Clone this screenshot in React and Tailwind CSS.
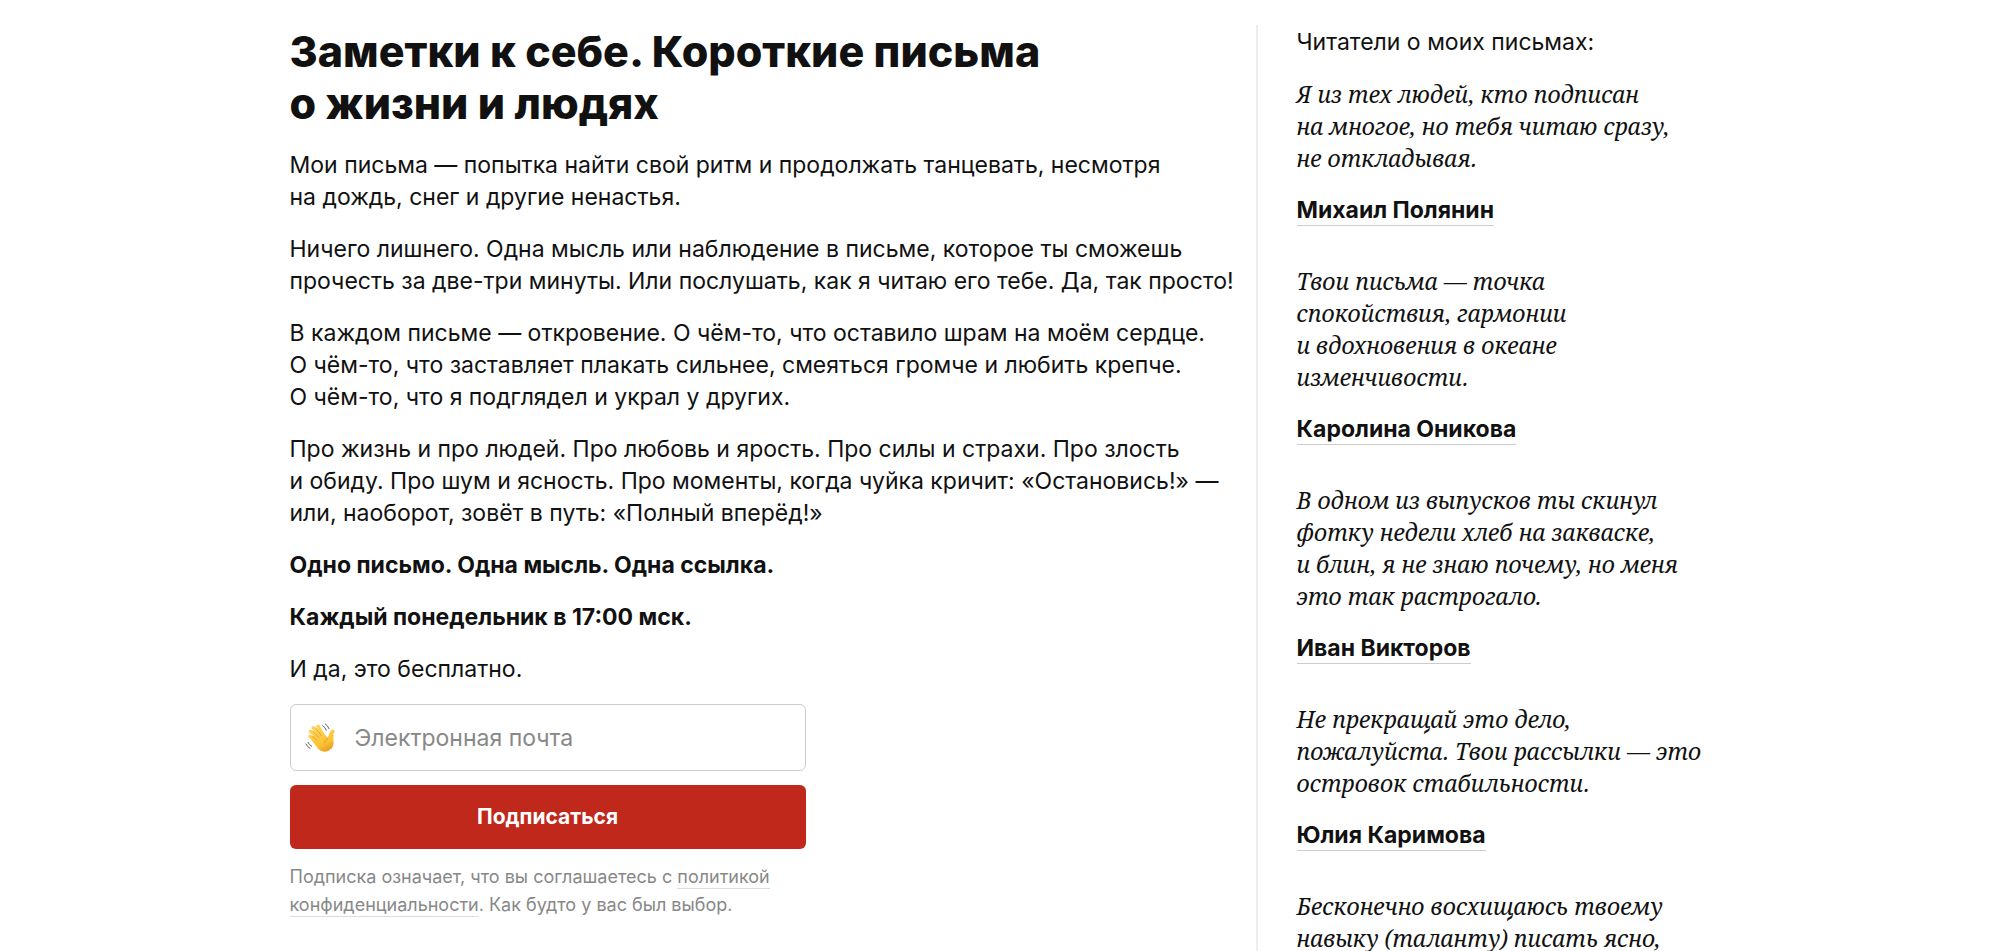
const intro = [
  ['Мои письма — попытка найти свой ритм и продолжать танцевать, несмотря', 'на дождь, снег и другие ненастья.'],
  ['Ничего лишнего. Одна мысль или наблюдение в письме, которое ты сможешь', 'прочесть за две-три минуты. Или послушать, как я читаю его тебе. Да, так просто!'],
  ['В каждом письме — откровение. О чём-то, что оставило шрам на моём сердце.', 'О чём-то, что заставляет плакать сильнее, смеяться громче и любить крепче.', 'О чём-то, что я подглядел и украл у других.'],
  ['Про жизнь и про людей. Про любовь и ярость. Про силы и страхи. Про злость', 'и обиду. Про шум и ясность. Про моменты, когда чуйка кричит: «Остановись!» —', 'или, наоборот, зовёт в путь: «Полный вперёд!»'],
];

const reviews = [
  { lines: ['Я из тех людей, кто подписан', 'на многое, но тебя читаю сразу,', 'не откладывая.'], name: 'Михаил Полянин' },
  { lines: ['Твои письма — точка', 'спокойствия, гармонии', 'и вдохновения в океане', 'изменчивости.'], name: 'Каролина Оникова' },
  { lines: ['В одном из выпусков ты скинул', 'фотку недели хлеб на закваске,', 'и блин, я не знаю почему, но меня', 'это так растрогало.'], name: 'Иван Викторов' },
  { lines: ['Не прекращай это дело,', 'пожалуйста. Твои рассылки — это', 'островок стабильности.'], name: 'Юлия Каримова' },
  { lines: ['Бесконечно восхищаюсь твоему', 'навыку (таланту) писать ясно,'], name: null },
];

function Lines({ lines }) {
  return lines.map((line) => (
    <span key={line} className="block whitespace-nowrap">{line}</span>
  ));
}

function WavingHand() {
  return (
    <svg viewBox="0 0 90 90" className="size-[30px] shrink-0" aria-hidden="true">
      <defs>
        <linearGradient id="skin" gradientUnits="userSpaceOnUse" x1="25" y1="10" x2="66" y2="88">
          <stop offset="0" stopColor="#ffd560" />
          <stop offset="0.7" stopColor="#fbc233" />
          <stop offset="1" stopColor="#e39a1e" />
        </linearGradient>
      </defs>
      <g fill="none" stroke="url(#skin)" strokeLinecap="round">
        <path d="M46 50 L17 25" strokeWidth="11" />
        <path d="M50 44 L25 14" strokeWidth="11" />
        <path d="M56 40 L39 10" strokeWidth="11" />
        <path d="M42 58 L15 40" strokeWidth="10" />
        <path d="M74 56 Q74 36 83 25" strokeWidth="11" />
      </g>
      <path d="M18 45 L34 29 L52 24 Q59 39 69 43 Q72 38 76 34 L86 34 Q84 52 86 60 Q84 79 67 85 Q52 90 39 77 L17 48 Z" fill="url(#skin)" />
      <g fill="none" stroke="#d98f17" strokeWidth="2" strokeLinecap="round">
        <path d="M24 25 L41 43 M32 15 L49 38 M21 40 L36 51 M68 47 Q58 51 58 61" />
      </g>
      <g fill="none" stroke="#666" strokeWidth="3" strokeLinecap="round">
        <path d="M53 8 Q61 12 64 22 M61 3 Q69 8 72 17" />
        <path d="M9 58 Q12 66 20 70 M3 63 Q7 72 15 76" />
      </g>
    </svg>
  );
}

export default function App() {
  return (
    <div className="h-screen overflow-hidden bg-white font-['Inter',sans-serif] text-[23px] leading-8 text-[#111]">
      <div className="mx-auto flex w-full max-w-[1420px] pt-[25px]">
        <main className="w-[966px] shrink-0">
          <h1 className="text-[43px] leading-[52px] font-extrabold">
            Заметки к себе. Короткие письма<br />о жизни и людях
          </h1>
          <div className="mt-5 flex flex-col gap-5">
            {intro.map((lines) => <p key={lines[0]}><Lines lines={lines} /></p>)}
            <p className="font-bold">Одно письмо. Одна мысль. Одна ссылка.</p>
            <p className="font-bold">Каждый понедельник в 17:00 мск.</p>
            <p>И да, это бесплатно.</p>
          </div>
          <form className="mt-[19px] flex w-[516px] flex-col" onSubmit={(e) => e.preventDefault()}>
            <label className="flex h-[67px] items-center gap-5 rounded-md border border-[#ccc] px-[14px]">
              <WavingHand />
              <input type="email" aria-label="Электронная почта" placeholder="Электронная почта" className="min-w-0 flex-1 outline-none placeholder:text-[#888]" />
            </label>
            <button type="submit" className="mt-[14px] h-16 rounded-md bg-[#bf281b] text-[21px] font-bold text-white">Подписаться</button>
            <p className="mt-[14px] text-lg leading-7 text-[#888]">
              Подписка означает, что вы соглашаетесь с{' '}
              <a href="#privacy" className="border-b border-[#ddd] pb-px">политикой<br />конфиденциальности</a>. Как будто у вас был выбор.
            </p>
          </form>
        </main>
        <aside className="min-w-0 flex-1 border-l-2 border-[#eee] pt-px pl-[39px]">
          <p>Читатели о моих письмах:</p>
          <div className="mt-5 flex flex-col gap-[39px]">
            {reviews.map((r) => (
              <figure key={r.lines[0]} className="flex flex-col items-start gap-5">
                <blockquote className="font-['Noto_Serif',serif] italic"><Lines lines={r.lines} /></blockquote>
                {r.name && (
                  <figcaption className="font-bold"><a href="#reader" className="border-b border-[#ccc] pb-px">{r.name}</a></figcaption>
                )}
              </figure>
            ))}
          </div>
        </aside>
      </div>
    </div>
  );
}
